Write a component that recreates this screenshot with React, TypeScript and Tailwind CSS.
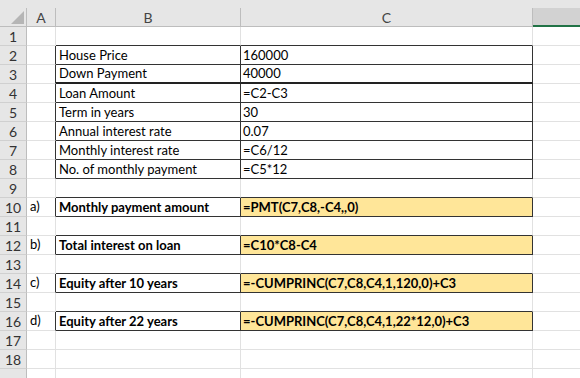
import React from "react";

type Row = { n: number; a?: string; b?: string; c?: string; kind: "empty" | "table" | "answer"; };

const rows: Row[] = [
  { n: 1, kind: "empty" },
  { n: 2, b: "House Price", c: "160000", kind: "table" },
  { n: 3, b: "Down Payment", c: "40000", kind: "table" },
  { n: 4, b: "Loan Amount", c: "=C2-C3", kind: "table" },
  { n: 5, b: "Term in years", c: "30", kind: "table" },
  { n: 6, b: "Annual interest rate", c: "0.07", kind: "table" },
  { n: 7, b: "Monthly interest rate", c: "=C6/12", kind: "table" },
  { n: 8, b: "No. of monthly payment", c: "=C5*12", kind: "table" },
  { n: 9, kind: "empty" },
  { n: 10, a: "a)", b: "Monthly payment amount", c: "=PMT(C7,C8,-C4,,0)", kind: "answer" },
  { n: 11, kind: "empty" },
  { n: 12, a: "b)", b: "Total interest on loan", c: "=C10*C8-C4", kind: "answer" },
  { n: 13, kind: "empty" },
  { n: 14, a: "c)", b: "Equity after 10 years", c: "=-CUMPRINC(C7,C8,C4,1,120,0)+C3", kind: "answer" },
  { n: 15, kind: "empty" },
  { n: 16, a: "d)", b: "Equity after 22 years", c: "=-CUMPRINC(C7,C8,C4,1,22*12,0)+C3", kind: "answer" },
  { n: 17, kind: "empty" },
  { n: 18, kind: "empty" },
  { n: 19, kind: "empty" },
];

export default function App() {
  const font = { fontFamily: "Lato, 'Open Sans', 'Liberation Sans', sans-serif" };
  return (
    <div className="w-[580px] h-[378px] overflow-hidden bg-white text-black" style={font}>
      <div className="h-[8px] bg-[#e6e6e6]" />
      <div className="grid grid-cols-[27px_29px_185px_292px_1fr] auto-rows-[19px]">
        {/* header */}
        <div className="relative bg-[#e6e6e6] border-r border-b border-[#bdbdbd]">
          <svg className="absolute left-[11px] top-[3px]" width="13" height="13" viewBox="0 0 13 13">
            <polygon points="13,0 13,13 0,13" fill="#b5b5b5" />
          </svg>
        </div>
        <div className="bg-[#e6e6e6] border-r border-b border-[#bdbdbd] flex items-center justify-center text-[14px] text-[#444]">A</div>
        <div className="bg-[#e6e6e6] border-r border-b border-[#bdbdbd] flex items-center justify-center text-[14px] text-[#444]">B</div>
        <div className="bg-[#e6e6e6] border-r border-b border-[#bdbdbd] flex items-center justify-center text-[14px] text-[#444]">C</div>
        <div className="bg-[#d2d2d2] border-b-2 border-[#217346]" />

        {rows.map((r, i) => {
          const next = rows[i + 1];
          const nextBordered = next && next.kind !== "empty";
          const bordered = r.kind !== "empty";
          const bold = r.kind === "answer";
          const thick = r.n === 3;
          const bottomDark = bordered || nextBordered;
          const bBottom = bottomDark
            ? thick
              ? "border-b-2 border-b-[#222]"
              : "border-b border-b-[#333]"
            : "border-b border-b-[#e1e1e1]";
          return (
            <React.Fragment key={r.n}>
              <div className="bg-[#e6e6e6] border-r border-r-[#bdbdbd] border-b border-b-[#d0d0d0] flex items-center justify-center text-[14px] text-[#333]">
                {r.n < 19 ? r.n : ""}
              </div>
              <div
                className={`border-b border-b-[#e1e1e1] border-r ${bordered ? "border-r-[#333]" : "border-r-[#e1e1e1]"} flex items-end pl-[3px] pb-[1px] text-[13px] leading-[17px]`}
              >
                {r.a}
              </div>
              <div
                className={`${bBottom} border-r ${bordered ? "border-r-[#333]" : "border-r-[#e1e1e1]"} flex items-end pl-[3px] pb-[0px] text-[13px] leading-[17px] whitespace-nowrap ${bold ? "font-bold" : ""}`}
              >
                {r.b}
              </div>
              <div
                className={`${bBottom} border-r ${bordered ? "border-r-[#333]" : "border-r-[#e1e1e1]"} ${bold ? "bg-[#ffe699] font-bold" : ""} flex items-end pl-[2px] text-[13px] leading-[17px] whitespace-nowrap`}
              >
                {r.c}
              </div>
              <div className="border-b border-b-[#e1e1e1]" />
            </React.Fragment>
          );
        })}
      </div>
    </div>
  );
}
